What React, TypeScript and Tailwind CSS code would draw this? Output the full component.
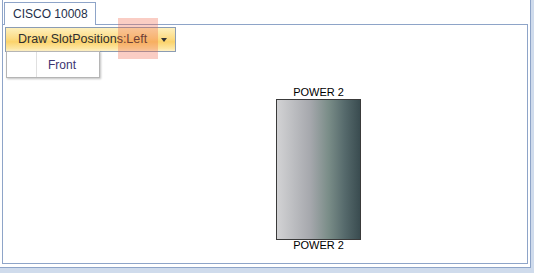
import React from 'react';

const font = { fontFamily: '"Liberation Sans", Arial, sans-serif' };

function PowerUnit({ label }: { label: string }) {
  return (
    <div className="absolute left-[273px] top-[61px] flex w-[85px] flex-col items-center">
      <span className="text-[11px] leading-[13px] text-black">{label}</span>
      <div className="h-[141px] w-[85px] border border-[#3a3a3a] bg-[linear-gradient(to_right,#d2d2d4_0%,#a6a8ad_40%,#7a8d88_62%,#55696b_82%,#3a4c50_100%)]" />
      <span className="-mt-[1px] text-[11px] leading-[12px] text-black">{label}</span>
    </div>
  );
}

export default function App() {
  return (
    <div className="relative h-[273px] w-[534px] overflow-hidden bg-[#cfdbec]" style={font}>
      <div className="h-[268px] w-[531px] border-r border-b border-[#8ea4c8] bg-white">
        <div className="ml-[2px] flex h-[264px] w-[526px] flex-col border-l border-[#8ea4c8]">
          <div className="flex h-[24px] items-end">
            <div className="relative z-10 -mb-[1px] ml-[1px] flex h-[23px] w-[92px] items-center border-t border-r border-l border-[#8ea4c8] bg-white pl-[8px] text-[12px] text-[#1e2f4a]">
              CISCO 10008
            </div>
          </div>
          <div className="relative flex-1 border-t border-r border-b border-[#8ea4c8]">
            <div className="ml-[2px] mt-[2px] flex h-[25px] w-[171px] items-center border border-[#8b9cb3] bg-[linear-gradient(to_bottom,#fef0bd_0%,#fcdc86_45%,#fbd36b_60%,#fde7a4_90%,#fff2c9_100%)] pl-[12px] text-[12.5px] text-[#2e2e2e]">
              <span>Draw SlotPositions:Left</span>
              <span className="ml-[14px] h-0 w-0 border-x-[3.5px] border-t-[4px] border-x-transparent border-t-[#333]" />
            </div>
            <div className="absolute left-[3px] top-[26px] z-20 flex h-[27px] w-[94px] border border-[#b5b5b5] bg-white shadow-[1px_1px_2px_rgba(0,0,0,0.25)]">
              <div className="w-[30px] border-r border-[#e0e0e0]" />
              <div className="flex items-center pl-[11px] text-[12px] text-[#3d3470]">Front</div>
            </div>
            <PowerUnit label="POWER 2" />
          </div>
        </div>
      </div>
      <div className="absolute left-[118px] top-[18px] z-30 h-[41px] w-[40px] bg-[rgba(238,100,70,0.32)]" />
    </div>
  );
}
